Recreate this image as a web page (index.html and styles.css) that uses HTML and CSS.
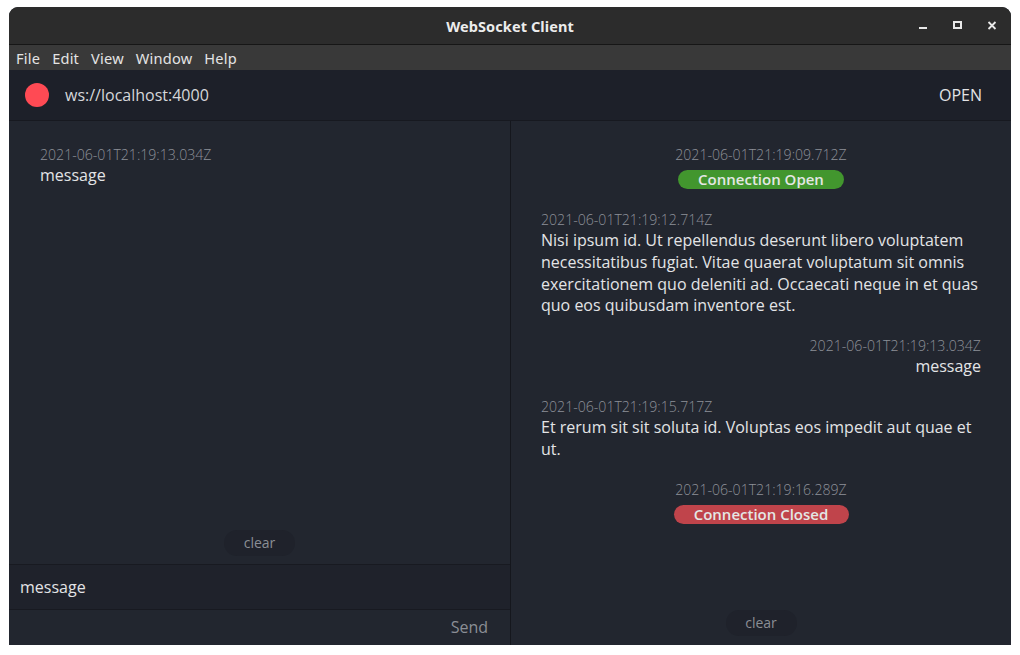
FILE: index.html
```html
<!DOCTYPE html>
<html>
<head>
<meta charset="utf-8">
<link rel="stylesheet" href="styles.css">
</head>
<body>
<div class="window">
  <div class="titlebar">
    <div class="title">WebSocket Client</div>
    <div class="controls">
      <svg class="ctl" width="10" height="10" viewBox="0 0 10 10"><rect x="0" y="6" width="8" height="2" fill="#e8e8e8"/></svg>
      <svg class="ctl" width="10" height="10" viewBox="0 0 10 10"><rect x="1" y="1" width="7" height="6" fill="none" stroke="#e8e8e8" stroke-width="2"/></svg>
      <svg class="ctl" width="10" height="10" viewBox="0 0 10 10"><path d="M1.5 1 L8.5 8 M8.5 1 L1.5 8" stroke="#e8e8e8" stroke-width="1.8"/></svg>
    </div>
  </div>
  <div class="menubar">
    <span>File</span><span>Edit</span><span>View</span><span>Window</span><span>Help</span>
  </div>
  <div class="urlbar">
    <div class="status-dot"></div>
    <div class="url">ws://localhost:4000</div>
    <div class="open">OPEN</div>
  </div>
  <div class="panels">
    <div class="panel left">
      <div class="list">
        <div class="entry">
          <div class="ts">2021-06-01T21:19:13.034Z</div>
          <div class="msg">message</div>
        </div>
      </div>
      <div class="clear-row"><div class="clear">clear</div></div>
      <div class="input">message</div>
      <div class="send-row"><span class="send">Send</span></div>
    </div>
    <div class="panel right">
      <div class="list">
        <div class="entry center">
          <div class="ts">2021-06-01T21:19:09.712Z</div>
          <div class="badge green">Connection Open</div>
        </div>
        <div class="entry">
          <div class="ts">2021-06-01T21:19:12.714Z</div>
          <div class="msg">Nisi ipsum id. Ut repellendus deserunt libero voluptatem necessitatibus fugiat. Vitae quaerat voluptatum sit omnis exercitationem quo deleniti ad. Occaecati neque in et quas quo eos quibusdam inventore est.</div>
        </div>
        <div class="entry rightalign">
          <div class="ts">2021-06-01T21:19:13.034Z</div>
          <div class="msg">message</div>
        </div>
        <div class="entry">
          <div class="ts">2021-06-01T21:19:15.717Z</div>
          <div class="msg">Et rerum sit sit soluta id. Voluptas eos impedit aut quae et ut.</div>
        </div>
        <div class="entry center">
          <div class="ts">2021-06-01T21:19:16.289Z</div>
          <div class="badge red">Connection Closed</div>
        </div>
      </div>
      <div class="clear-row bottom"><div class="clear">clear</div></div>
    </div>
  </div>
</div>
</body>
</html>
```
FILE: styles.css
```css
html, body {
  margin: 0;
  padding: 0;
  background: #ffffff;
}
body {
  padding: 7px 9px 0 9px;
  font-family: "Open Sans", "Noto Sans", sans-serif;
}
.window {
  width: 1002px;
  height: 638px;
  display: flex;
  flex-direction: column;
  border-radius: 9px 9px 0 0;
  overflow: hidden;
  background: #22262f;
}
.titlebar {
  height: 37px;
  background: #2c2c2c;
  border-bottom: 1px solid #161616;
  display: flex;
  align-items: center;
  justify-content: center;
  position: relative;
}
.title {
  font-family: "Noto Sans", sans-serif;
  font-weight: 700;
  font-size: 14.5px;
  color: #ececec;
  letter-spacing: 0.1px;
  margin-top: 1px;
}
.controls {
  position: absolute;
  right: 14px;
  top: 14px;
  display: flex;
  gap: 24px;
}
.ctl { display: block; }
.menubar {
  height: 25px;
  background: #393939;
  display: flex;
  align-items: center;
  padding-left: 7px;
  gap: 12px;
  font-family: "Noto Sans", sans-serif;
  font-size: 14.6px;
  letter-spacing: 0.2px;
  color: #e4e4e4;
}
.urlbar {
  height: 50px;
  background: #1d2029;
  border-bottom: 1px solid #171920;
  display: flex;
  align-items: center;
  padding: 0 29px 0 16px;
}
.status-dot {
  width: 24px;
  height: 24px;
  border-radius: 50%;
  background: #ff4a54;
}
.url {
  margin-left: 16px;
  font-size: 16px;
  color: #d6d7da;
  flex: 1;
}
.open {
  font-size: 16px;
  color: #e2e3e5;
  font-weight: 500;
}
.panels {
  flex: 1;
  display: flex;
  min-height: 0;
}
.panel {
  display: flex;
  flex-direction: column;
  background: #22262f;
}
.panel.left {
  width: 501px;
  border-right: 1px solid #15171d;
}
.panel.right {
  flex: 1;
}
.list {
  flex: 1;
  padding: 24px 30px 0 30px;
  display: flex;
  flex-direction: column;
  gap: 19px;
}
.panel.left .list {
  padding-left: 31px;
}
.entry {
  display: flex;
  flex-direction: column;
  align-items: flex-start;
}
.entry.center { align-items: center; }
.entry.rightalign { align-items: flex-end; text-align: right; }
.ts {
  font-size: 14.1px;
  line-height: 20px;
  font-weight: 300;
  color: #8d9098;
}
.msg {
  font-size: 16px;
  line-height: 21.8px;
  color: #e3e4e6;
}
.badge {
  margin-top: 5px;
  margin-bottom: 2px;
  height: 19px;
  line-height: 19px;
  border-radius: 10px;
  font-size: 15px;
  font-weight: 600;
  color: #e4e7e5;
  text-align: center;
}
.badge.green {
  background: #42962e;
  width: 166px;
}
.badge.red {
  background: #c0444b;
  width: 175px;
}
.clear-row {
  display: flex;
  justify-content: center;
  padding-bottom: 8px;
}
.clear-row.bottom { padding-bottom: 9px; }
.clear {
  width: 71px;
  height: 26px;
  line-height: 26px;
  text-align: center;
  border-radius: 13px;
  background: #1f222b;
  font-size: 14px;
  color: #8b8e95;
}
.input {
  height: 44px;
  border-top: 1px solid #181a21;
  border-bottom: 1px solid #181a21;
  background: #1f222b;
  display: flex;
  align-items: center;
  padding-left: 11px;
  font-size: 16px;
  color: #e3e4e6;
}
.send-row {
  height: 35px;
  display: flex;
  align-items: center;
  justify-content: flex-end;
  padding-right: 22px;
}
.send {
  font-size: 16px;
  color: #8b8e95;
  font-weight: 500;
  margin-top: -1px;
}
```
